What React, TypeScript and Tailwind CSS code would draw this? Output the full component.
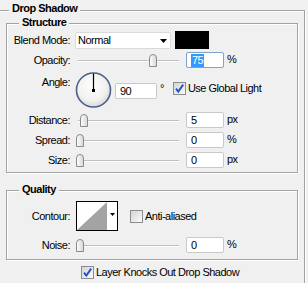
import React from "react";

function Checkbox({ checked }: { checked?: boolean }) {
  return (
    <div className="w-[13px] h-[13px] shrink-0 border border-[#8d8d8d] bg-linear-to-br from-[#d4d4d4] to-[#fbfbfb] flex items-center justify-center">
      {checked && (
        <svg width="11" height="11" viewBox="0 0 11 11">
          <path d="M2 5.6 L4.3 8.6 L9.2 1.6" stroke="#2552c4" strokeWidth="1.9" fill="none" />
        </svg>
      )}
    </div>
  );
}

function Thumb() {
  return (
    <svg width="8" height="13" viewBox="0 0 8 13">
      <defs>
        <linearGradient id="tg" x1="0" y1="0" x2="1" y2="0">
          <stop offset="0" stopColor="#ffffff" />
          <stop offset="1" stopColor="#d6d6d6" />
        </linearGradient>
      </defs>
      <path d="M0.5 12.5 V4 Q0.5 0.5 4 0.5 Q7.5 0.5 7.5 4 V12.5 Z" fill="url(#tg)" stroke="#8a8a8a" />
    </svg>
  );
}

function Slider({ thumb }: { thumb: number }) {
  return (
    <div className="relative w-[104px] h-[16px] shrink-0">
      <div className="absolute left-[2px] right-[1px] top-[8px] h-[2px] border-t border-[#c0c0c0] bg-white" />
      <div className="absolute top-[2px]" style={{ left: thumb }}>
        <Thumb />
      </div>
    </div>
  );
}

function Field({ value, w = 38, focused }: { value: string; w?: number; focused?: boolean }) {
  return (
    <div
      className={`h-[16px] shrink-0 rounded-[2px] bg-white pl-[4px] flex items-center leading-[13px] border ${
        focused ? "border-[#7da2ce]" : "border-[#c9c9c9]"
      }`}
      style={{ width: w }}
    >
      {focused ? <span className="bg-[#3399ff] text-white px-[1px]">{value}</span> : value}
    </div>
  );
}

function Label({ children }: { children: React.ReactNode }) {
  return <div className="w-[63px] shrink-0 text-right leading-[13px]">{children}</div>;
}

function SliderRow({ label, thumb, value, unit, mt, focused }: { label: string; thumb: number; value: string; unit: string; mt: string; focused?: boolean }) {
  return (
    <div className={`flex items-center h-[16px] ${mt}`}>
      <Label>{label}</Label>
      <div className="ml-[6px]">
        <Slider thumb={thumb} />
      </div>
      <div className="ml-[6px]">
        <Field value={value} focused={focused} />
      </div>
      <div className="ml-[3px] leading-[13px] -mt-[1px]">{unit}</div>
    </div>
  );
}

function Group({ title, className, children }: { title: string; className: string; children?: React.ReactNode }) {
  return (
    <div className={`relative border border-[#a3a3a3] shadow-[1px_1px_0_#fff,inset_1px_1px_0_#fff] ${className}`}>
      <span className="absolute left-[12px] top-[-8px] px-[3px] bg-[#f0f0f0] font-bold leading-[13px]">{title}</span>
      {children}
    </div>
  );
}

export default function App() {
  return (
    <div className="w-[308px] h-[283px] overflow-hidden bg-[#f0f0f0] pt-[10px] text-[11px] tracking-[-0.5px] text-black font-['Liberation_Sans',Arial,sans-serif]">
      <div className="relative -ml-[3px] w-[308px] h-[300px] border border-[#a3a3a3] shadow-[1px_1px_0_#fff,inset_1px_1px_0_#fff]">
        <span className="absolute left-[11px] top-[-9px] px-[3px] bg-[#f0f0f0] font-bold leading-[13px]">Drop Shadow</span>

        <Group title="Structure" className="ml-[8px] mt-[12px] w-[292px] h-[150px]">
          {/* Blend mode */}
          <div className="flex items-center h-[18px] mt-[7px]">
            <Label>Blend Mode:</Label>
            <div className="ml-[5px] w-[96px] h-[17px] mt-[1px] bg-white border border-[#dadada] rounded-[2px] flex items-center pl-[2px] pr-[2px] leading-[13px]">
              <span className="flex-1">Normal</span>
              <svg width="7" height="4" viewBox="0 0 7 4" className="mr-[1px]">
                <polygon points="0,0 7,0 3.5,4" fill="#000" />
              </svg>
            </div>
            <div className="ml-[4px] w-[34px] h-[18px] bg-black" />
          </div>

          <SliderRow label="Opacity:" thumb={73} value="75" unit="%" mt="mt-[3px]" focused />

          {/* Angle */}
          <div className="flex items-start h-[36px] mt-[4px]">
            <div className="mt-[4px]">
              <Label>Angle:</Label>
            </div>
            <div className="ml-[5px]">
              <svg width="37" height="36" viewBox="0 0 37 36">
                <defs>
                  <radialGradient id="dial" cx="0.45" cy="0.4" r="0.6">
                    <stop offset="0" stopColor="#ffffff" />
                    <stop offset="0.7" stopColor="#f1f1ef" />
                    <stop offset="1" stopColor="#d9d9d6" />
                  </radialGradient>
                </defs>
                <circle cx="18.5" cy="18" r="17" fill="url(#dial)" stroke="#4d5f8c" strokeWidth="1.6" />
                <line x1="18.5" y1="1.5" x2="18.5" y2="19" stroke="#000" strokeWidth="1.2" />
                <rect x="17" y="17" width="3" height="3" fill="#000" />
              </svg>
            </div>
            <div className="ml-[3px] mt-[11px]">
              <Field value="90" w={42} />
            </div>
            <div className="ml-[3px] mt-[10px] leading-[13px]">°</div>
            <div className="ml-[9px] mt-[10px]">
              <Checkbox checked />
            </div>
            <div className="ml-[2px] mt-[10px] leading-[13px]">Use Global Light</div>
          </div>

          <SliderRow label="Distance:" thumb={4} value="5" unit="px" mt="mt-[4px]" />
          <SliderRow label="Spread:" thumb={0} value="0" unit="%" mt="mt-[4px]" />
          <SliderRow label="Size:" thumb={0} value="0" unit="px" mt="mt-[4px]" />
        </Group>

        <Group title="Quality" className="ml-[8px] mt-[17px] w-[292px] h-[70px]">
          <div className="flex items-center h-[30px] mt-[10px]">
            <Label>Contour:</Label>
            <div className="ml-[6px] w-[42px] h-[30px] border border-black bg-white flex items-start">
              <svg width="30" height="28" viewBox="0 0 30 28">
                <polygon points="0,28 30,0 30,28" fill="#a3a3a3" />
              </svg>
              <div className="flex-1 flex justify-center pt-[11px]">
                <svg width="5" height="3" viewBox="0 0 5 3">
                  <polygon points="0,0 5,0 2.5,3" fill="#000" />
                </svg>
              </div>
            </div>
            <div className="ml-[12px]">
              <Checkbox />
            </div>
            <div className="ml-[2px] leading-[13px]">Anti-aliased</div>
          </div>
          <SliderRow label="Noise:" thumb={0} value="0" unit="%" mt="mt-[6px]" />
        </Group>

        <div className="flex items-center ml-[83px] mt-[6px] h-[13px]">
          <Checkbox checked />
          <div className="ml-[2px] leading-[13px]">Layer Knocks Out Drop Shadow</div>
        </div>
      </div>
    </div>
  );
}
